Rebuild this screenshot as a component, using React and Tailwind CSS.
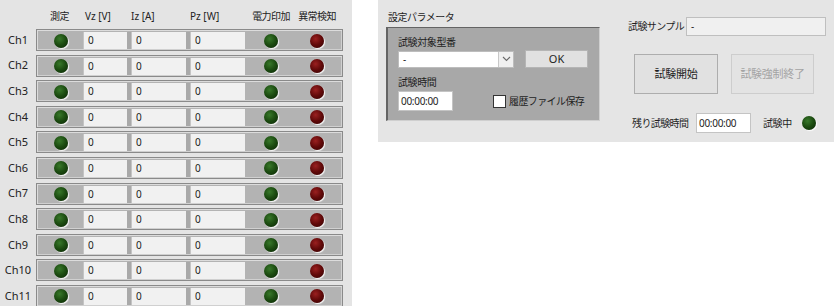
import React from 'react';

const channels = ['Ch1', 'Ch2', 'Ch3', 'Ch4', 'Ch5', 'Ch6', 'Ch7', 'Ch8', 'Ch9', 'Ch10', 'Ch11'];

const Led = ({ red }) => (
  <span
    className={`block w-[14px] h-[14px] rounded-full shadow-[1px_1px_1px_rgba(255,255,255,0.95)] ${
      red
        ? 'bg-[radial-gradient(circle_at_40%_35%,#9a2020_0%,#600909_50%,#330303_100%)]'
        : 'bg-[radial-gradient(circle_at_40%_35%,#38782a_0%,#1b4a10_50%,#0b2606_100%)]'
    }`}
  />
);

const Cell = ({ w }) => (
  <div className={`${w} h-full bg-[#f1f1f1] shadow-[inset_1px_0_0_#c4c4c4] pl-[5px] text-[10px] leading-[17px] text-[#222]`}>0</div>
);

const ChannelRow = ({ name }) => (
  <div className="flex items-center h-[22px]">
    <div className="w-[36px] text-center text-[11px] text-[#222]">{name}</div>
    <div className="w-[307px] h-[22px] border border-[#8a8a8a] bg-[#b3b3b3] shadow-[inset_1px_1px_0_#dcdcdc,inset_-1px_-1px_0_#d0d0d0] pt-[2px] pb-[1px] pl-[1px] flex">
      <div className="w-[45px] h-full flex items-center justify-center">
        <Led />
      </div>
      <Cell w="w-[44px]" />
      <div className="w-[4px] h-full bg-[#a9a9a9]" />
      <Cell w="w-[55px]" />
      <div className="w-[4px] h-full bg-[#a9a9a9]" />
      <Cell w="w-[55px]" />
      <div className="w-[52px] h-full flex items-center justify-center">
        <Led />
      </div>
      <div className="w-[40px] h-full flex items-center justify-center">
        <Led red />
      </div>
    </div>
  </div>
);

export default function App() {
  return (
    <div className="flex w-[834px] h-[306px] bg-white overflow-hidden font-['Noto_Sans','Noto_Sans_CJK_JP',sans-serif] text-[#1e1e1e]">
      {/* channel table */}
      <div className="w-[352px] h-full bg-[#e4e4e4] shrink-0">
        <div className="flex h-[29px] pt-[10px] text-[10px] leading-[12px] text-[#222]">
          <div className="w-[36px]" />
          <div className="w-[47px] text-center tracking-[-0.5px]">測定</div>
          <div className="w-[48px] pl-[2px]">Vz [V]</div>
          <div className="w-[59px]">Iz [A]</div>
          <div className="w-[56px]">Pz [W]</div>
          <div className="w-[50px] text-center tracking-[-0.6px] whitespace-nowrap">電力印加</div>
          <div className="w-[42px] text-center tracking-[-0.6px] whitespace-nowrap">異常検知</div>
        </div>
        <div className="flex flex-col gap-[3.6px]">
          {channels.map((c) => (
            <ChannelRow key={c} name={c} />
          ))}
        </div>
      </div>

      {/* control panel */}
      <div className="ml-[26px] w-[456px] h-[142px] bg-[#e5e5e5] flex">
        <div className="pl-[8px] pt-[10px] w-[222px]">
          <div className="text-[10px] leading-[14px] tracking-[-0.5px] pl-[2px]">設定パラメータ</div>
          <div className="mt-[3px] w-[214px] h-[94px] bg-[#a8a8a8] border-t border-l-2 border-[#646464] border-r border-b border-r-[#cfcfcf] border-b-[#cfcfcf] pl-[10px] pt-[7px]">
            <div className="text-[10px] leading-[14px] tracking-[-0.4px]">試験対象型番</div>
            <div className="flex items-center mt-[1px]">
              <div className="w-[116px] h-[17px] bg-white border border-[#bdbdbd] flex items-center">
                <span className="flex-1 pl-[4px] text-[10px] leading-[15px]">-</span>
                <span className="w-[15px] h-full border-l border-[#c8c8c8] bg-[#f0f0f0] flex items-center justify-center">
                  <svg width="9" height="6" viewBox="0 0 9 6">
                    <path d="M1 1l3.5 3.5L8 1" fill="none" stroke="#6a6a6a" strokeWidth="1.1" />
                  </svg>
                </span>
              </div>
              <div className="ml-[11px] w-[63px] h-[18px] bg-[#e1e1e1] border border-[#b5b5b5] flex items-center justify-center text-[11px]">OK</div>
            </div>
            <div className="mt-[7px] text-[10px] leading-[14px] tracking-[-0.4px]">試験時間</div>
            <div className="flex items-center mt-[2px]">
              <div className="w-[55px] h-[20px] bg-white border border-[#c4c4c4] pl-[2px] text-[10px] leading-[18px] tracking-[-0.3px]">00:00:00</div>
              <div className="ml-[40px] w-[13px] h-[13px] bg-white border border-[#333]" />
              <div className="ml-[3px] text-[10px] tracking-[-0.6px]">履歴ファイル保存</div>
            </div>
          </div>
        </div>

        <div className="pl-[28px] pt-[17px] flex-1">
          <div className="flex items-center h-[19px]">
            <div className="w-[58px] text-[10px] tracking-[-0.6px] whitespace-nowrap">試験サンプル</div>
            <div className="w-[140px] h-[19px] bg-[#f0f0f0] border border-[#bfbfbf] pl-[4px] text-[10px] leading-[17px]">-</div>
          </div>
          <div className="flex mt-[18px] ml-[6px] gap-[13px]">
            <div className="w-[84px] h-[40px] bg-[#e1e1e1] border border-[#adadad] flex items-center justify-center text-[11px] tracking-[-0.3px]">試験開始</div>
            <div className="w-[83px] h-[40px] bg-[#e3e3e3] border border-[#cdcdcd] flex items-center justify-center text-[11px] tracking-[-0.3px] text-[#a3a3a3]">試験強制終了</div>
          </div>
          <div className="flex items-center mt-[19px] ml-[4px] h-[20px]">
            <div className="w-[60px] text-[10px] tracking-[-0.6px] whitespace-nowrap">残り試験時間</div>
            <div className="ml-[4px] w-[55px] h-[20px] bg-white border border-[#c4c4c4] pl-[2px] text-[10px] leading-[18px] tracking-[-0.3px]">00:00:00</div>
            <div className="ml-[12px] text-[10px] tracking-[-0.4px]">試験中</div>
            <div className="ml-[10px]">
              <Led />
            </div>
          </div>
        </div>
      </div>
    </div>
  );
}
